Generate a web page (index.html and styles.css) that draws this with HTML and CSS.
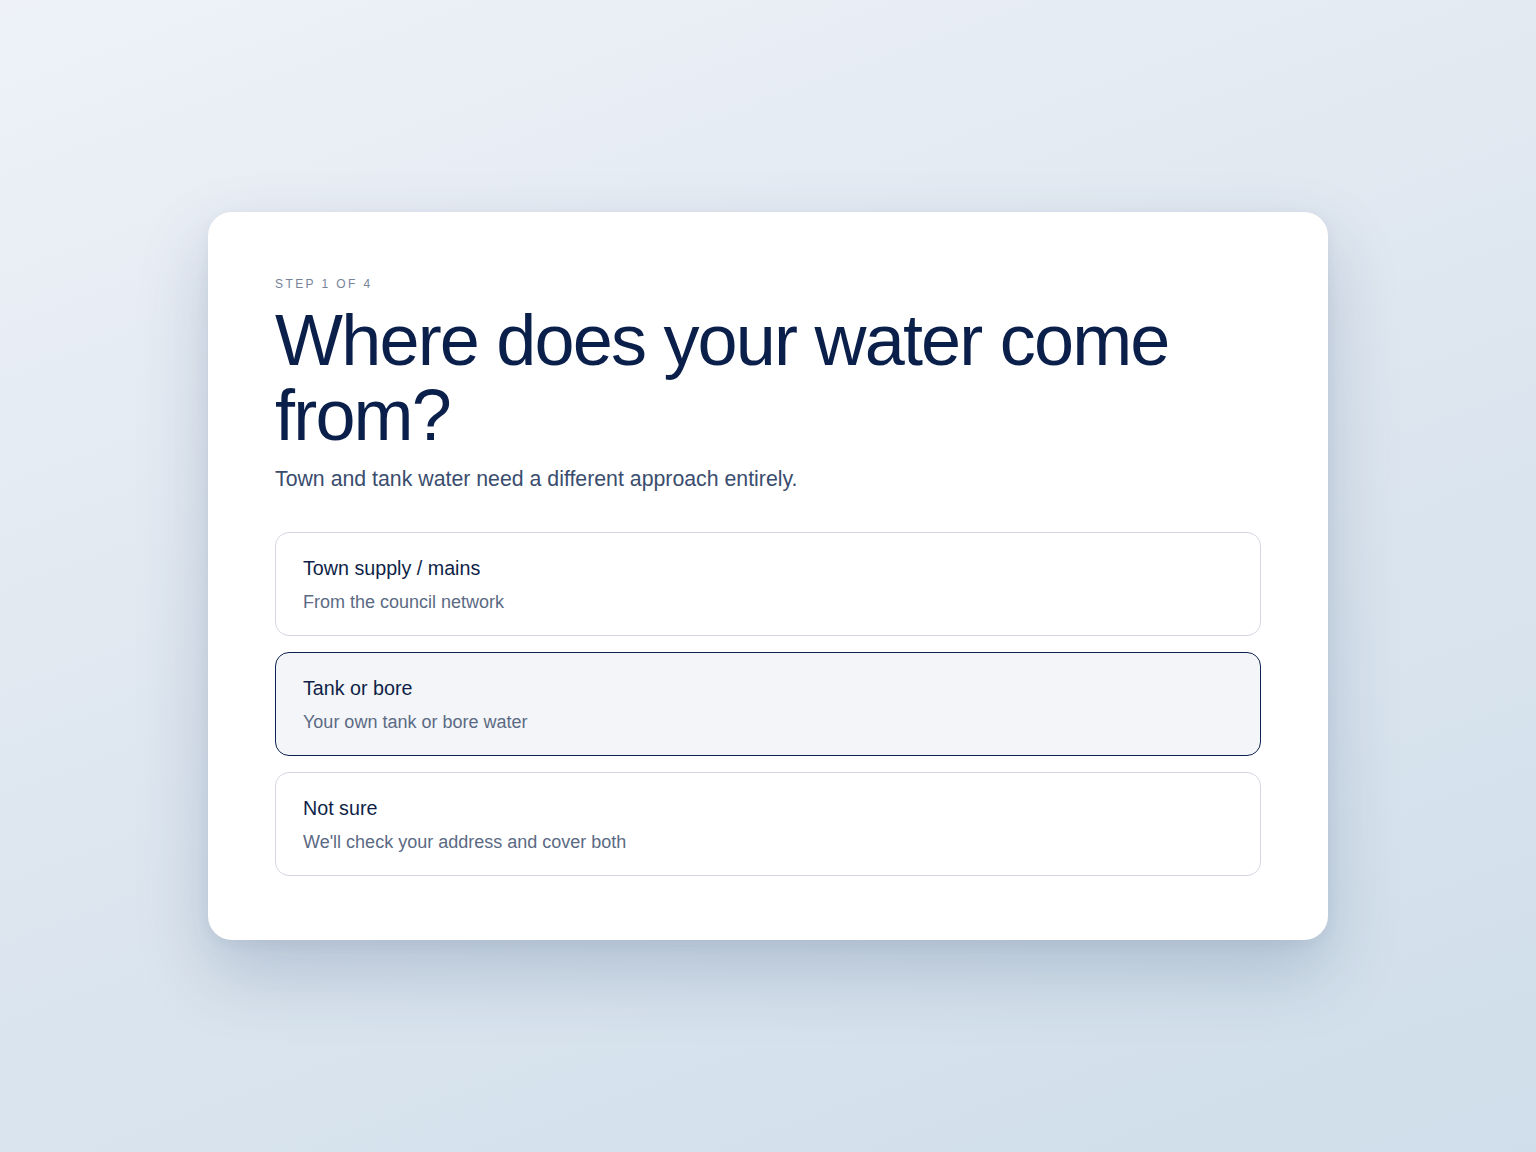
FILE: index.html
```html
<!DOCTYPE html>
<html>

<head>
    <title>Water source</title>
    <link rel="stylesheet" href="styles.css">
</head>

<body>
    <main class="card">
        <div class="step">Step 1 of 4</div>
        <h1 class="question">Where does your water come from?</h1>
        <p class="lead">Town and tank water need a different approach entirely.</p>

        <div class="options">
            <label class="option">
                <input type="radio" name="source" value="mains">
                <span class="option-title">Town supply / mains</span>
                <span class="option-desc">From the council network</span>
            </label>
            <label class="option selected">
                <input type="radio" name="source" value="tank" checked>
                <span class="option-title">Tank or bore</span>
                <span class="option-desc">Your own tank or bore water</span>
            </label>
            <label class="option">
                <input type="radio" name="source" value="unsure">
                <span class="option-title">Not sure</span>
                <span class="option-desc">We'll check your address and cover both</span>
            </label>
        </div>
    </main>
</body>

</html>
```

FILE: styles.css
```css
* {
    box-sizing: border-box;
}

html,
body {
    height: 100%;
}

body {
    margin: 0;
    display: flex;
    align-items: center;
    justify-content: center;
    font-family: "Liberation Sans", Arial, Helvetica, sans-serif;
    color: #0c1f4a;
    background: linear-gradient(160deg, #eef2f8 0%, #dfe7f0 45%, #cfdeea 100%);
}

.card {
    width: 1120px;
    padding: 65px 67px 64px;
    background: #fff;
    border-radius: 24px;
    box-shadow: 0 32px 70px rgba(40, 70, 110, 0.22), 0 4px 14px rgba(40, 70, 110, 0.06);
}

.step {
    font-size: 12px;
    line-height: 14px;
    letter-spacing: 0.2em;
    text-transform: uppercase;
    color: #768399;
}

.question {
    margin: 12px 0 0;
    font-size: 72px;
    font-weight: 400;
    line-height: 75px;
    letter-spacing: -0.025em;
    color: #0b1f4b;
}

.lead {
    margin: 11px 0 0;
    font-size: 21.3px;
    line-height: 30px;
    color: #3a4d6e;
}

.options {
    display: flex;
    flex-direction: column;
    gap: 16px;
    margin-top: 38px;
}

.option {
    display: flex;
    flex-direction: column;
    height: 104px;
    padding: 22px 27px 0;
    border: 1px solid #d3d8e0;
    border-radius: 14px;
    background: #fff;
    cursor: pointer;
}

.option input {
    display: none;
}

.option.selected {
    border-color: #0d2152;
    background: #f3f5f8;
}

.option-title {
    font-size: 19.7px;
    line-height: 26px;
    color: #0e1f47;
}

.option-desc {
    margin-top: 9px;
    font-size: 18px;
    line-height: 24px;
    color: #5b6a84;
}
```
